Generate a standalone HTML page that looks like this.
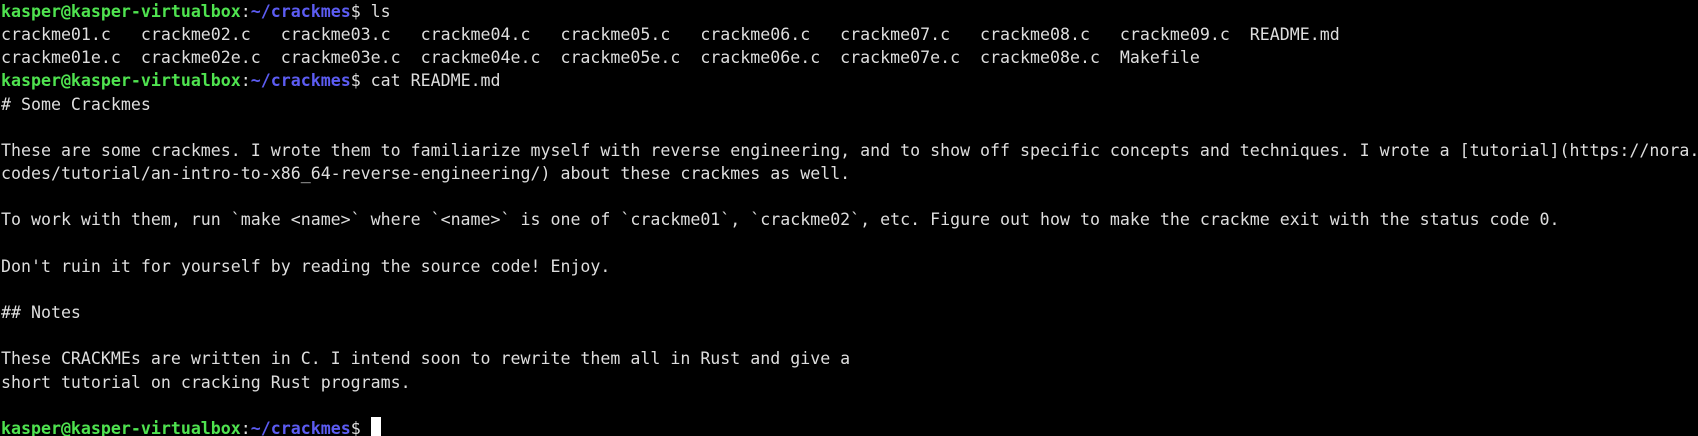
<!DOCTYPE html>
<html><head><meta charset="utf-8"><style>
html,body{margin:0;padding:0;background:#000;width:1698px;height:436px;overflow:hidden}
pre{margin:0;padding:0 0 0 1px;font-family:"DejaVu Sans Mono","Liberation Mono",monospace;font-size:16.6px;line-height:23.15px;color:#dedede;white-space:pre}
.g{color:#4fe34f;font-weight:bold}.b{color:#5c5cf2;font-weight:bold}
.c{display:inline-block;width:10px;height:23px;background:#fff;vertical-align:top}
</style></head><body><pre><span class="g">kasper@kasper-virtualbox</span>:<span class="b">~/crackmes</span>$ ls
crackme01.c   crackme02.c   crackme03.c   crackme04.c   crackme05.c   crackme06.c   crackme07.c   crackme08.c   crackme09.c  README.md
crackme01e.c  crackme02e.c  crackme03e.c  crackme04e.c  crackme05e.c  crackme06e.c  crackme07e.c  crackme08e.c  Makefile
<span class="g">kasper@kasper-virtualbox</span>:<span class="b">~/crackmes</span>$ cat README.md
# Some Crackmes

These are some crackmes. I wrote them to familiarize myself with reverse engineering, and to show off specific concepts and techniques. I wrote a [tutorial](https://nora.
codes/tutorial/an-intro-to-x86_64-reverse-engineering/) about these crackmes as well.

To work with them, run `make &lt;name&gt;` where `&lt;name&gt;` is one of `crackme01`, `crackme02`, etc. Figure out how to make the crackme exit with the status code 0.

Don't ruin it for yourself by reading the source code! Enjoy.

## Notes

These CRACKMEs are written in C. I intend soon to rewrite them all in Rust and give a
short tutorial on cracking Rust programs.

<span class="g">kasper@kasper-virtualbox</span>:<span class="b">~/crackmes</span>$ <span class="c"></span></pre></body></html>
